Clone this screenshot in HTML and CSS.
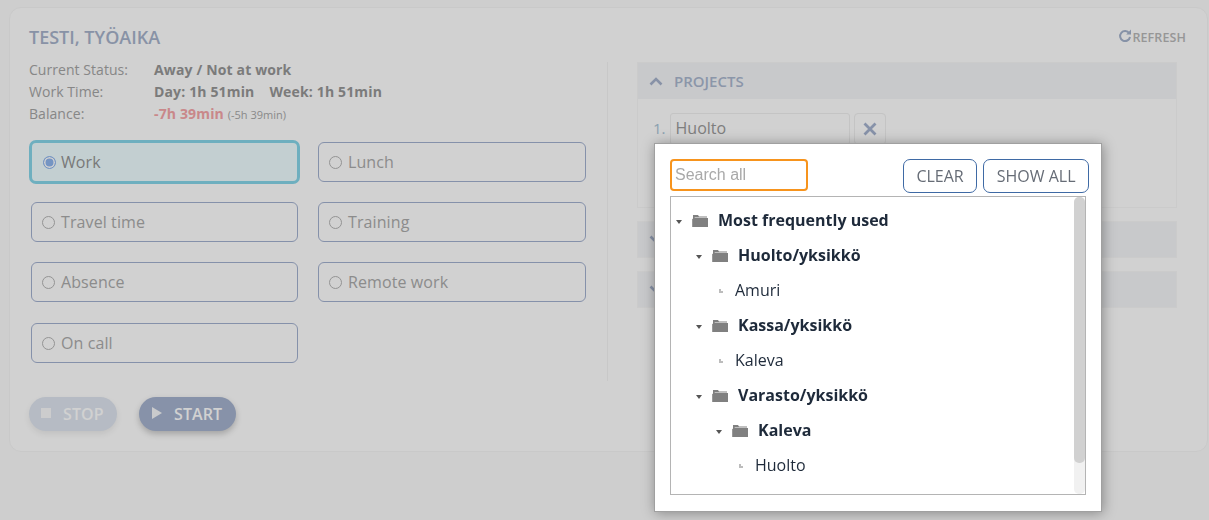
FILE: index.html
```html
<!DOCTYPE html>
<html lang="en">
<head>
<meta charset="utf-8">
<title>Testi, työaika</title>
<link rel="stylesheet" href="styles.css">
</head>
<body>
<main class="card">
  <header class="card-head">
    <h1 class="title">TESTI, TYÖAIKA</h1>
    <div class="refresh">
      <svg class="refresh-icon" viewBox="0 0 14 14" width="14" height="14"><path d="M11.2 4.2A5 5 0 1 0 12 8" fill="none" stroke="currentColor" stroke-width="2"/><path d="M8.2 5.4H13V.6z" fill="currentColor"/></svg>
      <span>REFRESH</span>
    </div>
  </header>
  <div class="columns">
    <section class="left">
      <dl class="info">
        <dt>Current Status:</dt><dd>Away / Not at work</dd>
        <dt>Work Time:</dt><dd><span class="day">Day: 1h 51min</span>Week: 1h 51min</dd>
        <dt>Balance:</dt><dd><span class="neg">-7h 39min</span> <small>(-5h 39min)</small></dd>
      </dl>
      <div class="choices">
        <div class="choice selected"><span class="radio on"></span>Work</div>
        <div class="choice"><span class="radio"></span>Lunch</div>
        <div class="choice"><span class="radio"></span>Travel time</div>
        <div class="choice"><span class="radio"></span>Training</div>
        <div class="choice"><span class="radio"></span>Absence</div>
        <div class="choice"><span class="radio"></span>Remote work</div>
        <div class="choice"><span class="radio"></span>On call</div>
      </div>
    </section>
    <section class="right">
      <div class="panel">
        <div class="panel-head">
          <svg class="chev" viewBox="0 0 14 9" width="14" height="9"><path d="M1.5 7.5 7 2l5.5 5.5" fill="none" stroke="currentColor" stroke-width="2.6"/></svg>
          PROJECTS
        </div>
        <div class="panel-body">
          <span class="num">1.</span>
          <div class="field">Huolto</div>
          <div class="remove"><svg viewBox="0 0 14 14" width="14" height="14"><path d="M1.5 1.5l11 11M12.500 1.500l-11 11" stroke="currentColor" stroke-width="2.800" fill="none"/></svg></div>
        </div>
      </div>
      <div class="panel closed"><svg class="chev" viewBox="0 0 14 9" width="14" height="9"><path d="M1.5 1.500 7 7l5.500-5.500" fill="none" stroke="currentColor" stroke-width="2.600"/></svg></div>
      <div class="panel closed"><svg class="chev" viewBox="0 0 14 9" width="14" height="9"><path d="M1.5 1.500 7 7l5.500-5.500" fill="none" stroke="currentColor" stroke-width="2.600"/></svg></div>
    </section>
  </div>
  <div class="actions">
    <div class="btn stop"><span class="sq"></span>STOP</div>
    <div class="btn start"><span class="tri"></span>START</div>
  </div>
</main>

<div class="overlay"></div>

<div class="modal">
  <div class="modal-top">
    <div class="search">Search all</div>
    <div class="modal-btns">
      <div class="mbtn">CLEAR</div>
      <div class="mbtn">SHOW ALL</div>
    </div>
  </div>
  <div class="tree">
    <ul class="rows">
      <li class="row l0"><span class="caret"></span><svg class="folder" viewBox="0 0 16 13" width="16" height="13"><path d="M1 2.500V1h5l1 1.500h8v1H3L1 5zM.2 5 2.500 4H16v9H.2z" fill="currentColor"/></svg><b>Most frequently used</b></li>
      <li class="row l1"><span class="caret"></span><svg class="folder" viewBox="0 0 16 13" width="16" height="13"><path d="M1 2.500V1h5l1 1.500h8v1H3L1 5zM.2 5 2.500 4H16v9H.2z" fill="currentColor"/></svg><b>Huolto/yksikkö</b></li>
      <li class="row leaf l1"><span class="dots"></span>Amuri</li>
      <li class="row l1"><span class="caret"></span><svg class="folder" viewBox="0 0 16 13" width="16" height="13"><path d="M1 2.500V1h5l1 1.500h8v1H3L1 5zM.2 5 2.500 4H16v9H.2z" fill="currentColor"/></svg><b>Kassa/yksikkö</b></li>
      <li class="row leaf l1"><span class="dots"></span>Kaleva</li>
      <li class="row l1"><span class="caret"></span><svg class="folder" viewBox="0 0 16 13" width="16" height="13"><path d="M1 2.500V1h5l1 1.500h8v1H3L1 5zM.2 5 2.500 4H16v9H.2z" fill="currentColor"/></svg><b>Varasto/yksikkö</b></li>
      <li class="row l2"><span class="caret"></span><svg class="folder" viewBox="0 0 16 13" width="16" height="13"><path d="M1 2.500V1h5l1 1.500h8v1H3L1 5zM.2 5 2.500 4H16v9H.2z" fill="currentColor"/></svg><b>Kaleva</b></li>
      <li class="row leaf l2"><span class="dots"></span>Huolto</li>
    </ul>
    <div class="scrollbar"><div class="thumb"></div></div>
  </div>
</div>
</body>
</html>
```
FILE: styles.css
```css
* { box-sizing: border-box; }
html, body { height: 100%; }
body {
  margin: 0;
  padding: 7px 1px 0 9px;
  height: 520px;
  overflow: hidden;
  background: #fcfcfc;
  font-family: "Open Sans", sans-serif;
  font-size: 14px;
  color: #9a9a9a;
}
.card {
  height: 445px;
  background: #fff;
  border: 1px solid #f6f6f6;
  border-radius: 12px;
  padding: 17px 21px 0 19px;
}
.card-head {
  display: flex;
  justify-content: space-between;
  align-items: center;
  height: 24px;
}
.title {
  margin: 0;
  font-size: 18px;
  line-height: 24px;
  font-weight: 600;
  color: #a7b3cb;
}
.refresh {
  display: flex;
  align-items: center;
  font-size: 12.500px;
  letter-spacing: .1px;
  font-weight: 600;
  color: #b8b8b8;
}
.refresh-icon { color: #a4b2cc; margin-bottom: 2px; }
.columns { display: flex; margin-top: 13px; height: 319px; }
.left { width: 579px; border-right: 1px solid #f4f4f4; flex: none; padding-right: 21px; }
.info {
  display: grid;
  grid-template-columns: 125px 1fr;
  grid-auto-rows: 22px;
  margin: -3px 0 0;
  line-height: 22px;
}
.info dt { color: #a5a5a5; letter-spacing: .05px; }
.info dd { margin: 0; font-weight: 700; color: #979797; letter-spacing: .15px; }
.day { margin-right: 15px; }
.neg { color: #f6a6a9; }
.info small { font-size: 11px; font-weight: 400; color: #a8a8a8; letter-spacing: 0; }
.choices {
  display: grid;
  grid-template-columns: 267px 268px;
  column-gap: 20px;
  grid-auto-rows: 40px;
  row-gap: 20px;
  margin: 17px 0 0 2px;
}
.choice {
  display: flex;
  align-items: center;
  border: 1px solid #a3b1d0;
  border-radius: 6px;
  padding-left: 10px;
  font-size: 16px;
  letter-spacing: .1px;
  color: #ababab;
  background: #fff;
}
.choices .choice:nth-child(7) { margin-top: 1px; height: 40px; }
.radio {
  width: 13px;
  height: 13px;
  border: 1px solid #b5b5b5;
  border-radius: 50%;
  margin-right: 6px;
  flex: none;
  background: #fff;
}
.radio.on { border-color: #8fb6ee; background: #8fb6ee; box-shadow: inset 0 0 0 1.500px #fff; }
.choice.selected {
  margin: -2px;
  border: 3px solid #87d6ea;
  background: #eefdff;
  padding-left: 11px;
  color: #949494;
  border-radius: 7px;
}
.selected .radio { margin-right: 5px; }
.right { flex: 1; padding-left: 29px; padding-right: 9px; }
.panel { border: 1px solid #f8f8f8; background: #fff; margin-bottom: 13px; }
.panel-head {
  display: flex;
  align-items: center;
  gap: 11px;
  height: 36px;
  padding-left: 11px;
  background: #f5f6f8;
  font-size: 15px;
  font-weight: 600;
  color: #aab7cf;
}
.chev { color: #a6b3cc; }
.panel-body { display: flex; align-items: flex-start; height: 108px; padding: 14px 0 0 15px; }
.panel.closed {
  display: flex;
  align-items: center;
  height: 37px;
  padding-left: 11px;
  background: #f5f6f8;
}
.num { font-size: 15px; line-height: 31px; color: #a9c4d6; margin-right: 4px; }
.field {
  width: 180px;
  height: 32px;
  border: 1px solid #efefef;
  border-radius: 3px;
  padding-left: 5px;
  font-size: 16px;
  line-height: 28px;
  color: #9a9a9a;
}
.remove {
  display: flex;
  align-items: center;
  justify-content: center;
  width: 32px;
  height: 32px;
  margin-left: 4px;
  border: 1px solid #efefef;
  border-radius: 4px;
  color: #a5b3cf;
}
.actions { display: flex; gap: 22px; margin-top: 16px; }
.btn {
  display: flex;
  align-items: center;
  height: 34px;
  border-radius: 17px;
  font-size: 16px;
  font-weight: 600;
  letter-spacing: .1px;
  color: #fff;
}
.stop { width: 88px; background: #dee5ef; padding-left: 12px; box-shadow: 0 3px 6px rgba(0,0,0,.08); }
.start { width: 97px; background: #a5b3cf; padding-left: 13px; box-shadow: 0 3px 6px rgba(0,0,0,.22); }
.sq { width: 10px; height: 10px; background: #f9f9fb; margin: -3px 12px 0 0; }
.tri {
  width: 0; height: 0;
  border-left: 10px solid #f6f7f9;
  border-top: 6px solid transparent;
  border-bottom: 6px solid transparent;
  margin: -3px 12px 0 0;
}
.overlay {
  position: fixed;
  inset: 0;
  background: rgba(0,0,0,.18);
}
.modal {
  position: absolute;
  left: 654px;
  top: 143px;
  width: 448px;
  height: 369px;
  background: #fff;
  border: 1px solid #a0a0a0;
  box-shadow: 1px 1px 12px rgba(0,0,0,.35);
  padding: 15px 15px 0;
}
.modal-top { display: flex; justify-content: space-between; height: 37px; }
.search {
  width: 138px;
  height: 32px;
  border: 2px solid #f7941d;
  border-radius: 4px;
  padding-left: 3px;
  font-family: "Liberation Sans", sans-serif;
  font-size: 16px;
  line-height: 27px;
  color: #a9a9a9;
}
.modal-btns { display: flex; gap: 6px; margin-right: -3px; }
.mbtn {
  height: 34px;
  padding: 0 12.500px;
  border: 1px solid #3f6aa5;
  border-radius: 7px;
  font-size: 16px;
  line-height: 33px;
  color: #666c76;
}
.tree {
  position: relative;
  width: 416px;
  height: 299px;
  border: 1px solid #b4b4b4;
}
.rows { list-style: none; margin: 0; padding: 5px 0 0; }
.row {
  display: flex;
  align-items: center;
  height: 35px;
  font-size: 16px;
  color: #1e2a3a;
}
.row b { font-weight: 700; margin-left: 10px; }
.l0 { padding-left: 5px; }
.l1 { padding-left: 25px; }
.l2 { padding-left: 45px; }
.leaf.l1 { padding-left: 49px; }
.leaf.l2 { padding-left: 69px; }
.caret {
  width: 0; height: 0;
  border-top: 4px solid #555;
  border-left: 3.500px solid transparent;
  border-right: 3.500px solid transparent;
  margin: 4px 10px 0 0;
}
.folder { color: #808080; flex: none; margin-top: 1px; }
.dots {
  width: 4px;
  height: 4px;
  margin: 3px 12px 0 -1px;
  background: radial-gradient(circle at 1px 1px, #bbb 0 .7px, transparent 1px), radial-gradient(circle at 1px 3px, #bbb 0 .7px, transparent 1px), radial-gradient(circle at 3px 3px, #bbb 0 .7px, transparent 1px);
}
.scrollbar {
  position: absolute;
  top: 0;
  right: 0;
  width: 11px;
  height: 297px;
  background: #f1f1f1;
  border-radius: 5px;
}
.thumb { height: 266px; background: #d1d1d1; border-radius: 5px; }
```
